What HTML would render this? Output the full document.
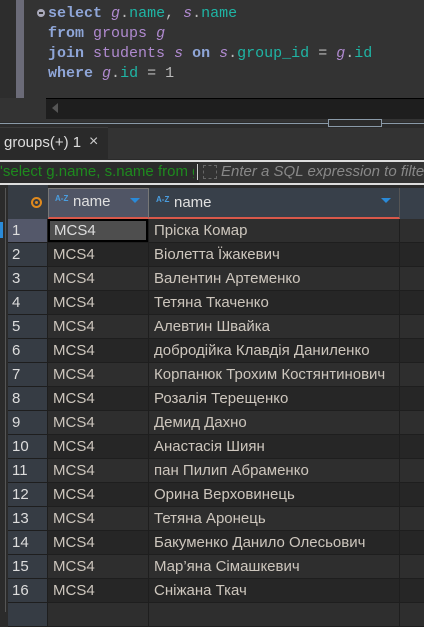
<!DOCTYPE html>
<html><head><meta charset="utf-8"><style>
*{margin:0;padding:0;box-sizing:border-box}
body{width:424px;height:622px;background:#2b2b2b;overflow:hidden;position:relative;font-family:"Liberation Sans","DejaVu Sans",sans-serif}
.abs{position:absolute}
.code{font-family:"Liberation Mono","DejaVu Sans Mono",monospace;font-size:15px;font-weight:bold;line-height:20px;white-space:pre;color:#ccc}
.k{color:#8fa6d8}.v{color:#b08ad0;font-style:italic;font-weight:normal}.t{color:#b08ad0;font-weight:normal}.c{color:#1fb5a5;font-weight:normal}.n{color:#bbb;font-weight:normal}
.row{position:absolute;left:0;width:424px;height:24px;font-size:15px;color:#cdc6bd}
.row div{position:absolute;top:0;height:24px;line-height:24px;border-right:1px solid #1e1e1e;border-bottom:1px solid #1e1e1e}
</style></head><body>
<div class="abs" style="left:0;top:0;width:424px;height:122px;background:#333"></div>
<div class="abs" style="left:0;top:0;width:16px;height:98px;background:#2d2d2d"></div>
<div class="abs" style="left:16px;top:0;width:8px;height:98px;background:#6b6b78"></div>
<div class="abs" style="left:37px;top:9px;width:8px;height:8px;border-radius:50%;background:#aab"></div>
<div class="abs" style="left:39px;top:12px;width:4px;height:2px;background:#333"></div>
<div class="abs code" style="left:48px;top:4px"><span class="k">select</span> <span class="v">g</span><span class="n">.</span><span class="c">name</span><span class="n">,</span> <span class="v">s</span><span class="n">.</span><span class="c">name</span>
<span class="k">from</span> <span class="t">groups</span> <span class="v">g</span>
<span class="k">join</span> <span class="t">students</span> <span class="v">s</span> <span class="k">on</span> <span class="v">s</span><span class="n">.</span><span class="c">group_id</span> <span class="n">=</span> <span class="v">g</span><span class="n">.</span><span class="c">id</span>
<span class="k">where</span> <span class="v">g</span><span class="n">.</span><span class="c">id</span> <span class="n">=</span> <span class="n">1</span></div>
<div class="abs" style="left:46px;top:98px;width:378px;height:21px;background:#1e1e1e;border-top:1px solid #000"></div>
<div class="abs" style="left:52px;top:103px;width:0;height:0;border-top:5px solid transparent;border-bottom:5px solid transparent;border-right:6px solid #555"></div>
<div class="abs" style="left:0;top:123px;width:424px;height:1px;background:#8a9aa8"></div>
<div class="abs" style="left:328px;top:119px;width:54px;height:8px;border:1px solid #8a9aa8;background:#2b2b2b"></div>
<div class="abs" style="left:0;top:127px;width:108px;height:6px;background:#3a3a3a"></div>
<div class="abs" style="left:0;top:128px;width:108px;height:31px;background:#2a2a2a"></div>
<div class="abs" style="left:108px;top:128px;width:316px;height:31px;background:#333"></div>
<div class="abs" style="left:4px;top:134px;font-size:15px;color:#ddd">groups(+) 1</div>
<div class="abs" style="left:89px;top:133px;font-size:16px;color:#ccc">×</div>
<div class="abs" style="left:0;top:160px;width:424px;height:2px;background:#ddd"></div>
<div class="abs" style="left:0;top:162px;width:424px;height:21px;background:#2b2b2b"></div>
<div class="abs" style="left:0;top:163px;width:194px;font-size:15px;color:#1e8a1e;white-space:nowrap;overflow:hidden">ʹselect g.name, s.name from g</div>
<div class="abs" style="left:197px;top:164px;width:1px;height:16px;background:#ccc"></div>
<div class="abs" style="left:199px;top:162px;width:225px;height:21px;background:#333"></div>
<div class="abs" style="left:203px;top:165px;width:14px;height:14px;border:1px dashed #666"></div>
<div class="abs" style="left:221px;top:163px;font-size:15px;font-style:italic;color:#888;white-space:nowrap">Enter a SQL expression to filter r</div>
<div class="abs" style="left:0;top:183px;width:424px;height:2px;background:#ddd"></div>
<div class="abs" style="left:0;top:185px;width:424px;height:437px;background:#2b2b2b"></div>
<div class="abs" style="left:0;top:188px;width:6px;height:424px;background:#2b2b2b;border-right:1px solid #555"></div>
<div class="abs" style="left:8px;top:185px;width:40px;height:34px;background:#363c44"></div>
<div class="abs" style="left:31px;top:197px;width:11px;height:11px;border:2px solid #e08a1e;border-radius:50%"></div>
<div class="abs" style="left:35px;top:201px;width:3px;height:3px;background:#e08a1e;border-radius:50%"></div>
<div class="abs" style="left:48px;top:188px;width:101px;height:31px;background:#505565;border:1px solid #777;border-bottom:2px solid #d9584a"></div>
<div class="abs" style="left:149px;top:188px;width:251px;height:31px;background:#38404a;border-right:1px solid #555;border-bottom:2px solid #d9584a"></div>
<div class="abs" style="left:400px;top:188px;width:24px;height:31px;background:#38404a"></div>
<div class="abs" style="left:55px;top:194px;font-size:8px;color:#4a9ee0;font-weight:bold">A-Z</div>
<div class="abs" style="left:73px;top:193px;font-size:15px;color:#e0e0e0">name</div>
<div class="abs" style="left:130px;top:198px;border-left:5px solid transparent;border-right:5px solid transparent;border-top:5px solid #2a8ad8"></div>
<div class="abs" style="left:156px;top:195px;font-size:8px;color:#4a9ee0;font-weight:bold">A-Z</div>
<div class="abs" style="left:174px;top:194px;font-size:15px;color:#e0e0e0">name</div>
<div class="abs" style="left:381px;top:198px;border-left:5px solid transparent;border-right:5px solid transparent;border-top:5px solid #2a8ad8"></div>
<div class="abs" style="left:0;top:222px;width:3px;height:16px;background:#2a8ad8"></div>
<div id="rows"></div>
<script>
var n=["Пріска Комар","Віолетта Їжакевич","Валентин Артеменко","Тетяна Ткаченко","Алевтин Швайка","добродійка Клавдія Даниленко","Корпанюк Трохим Костянтинович","Розалія Терещенко","Демид Дахно","Анастасія Шиян","пан Пилип Абраменко","Орина Верховинець","Тетяна Аронець","Бакуменко Данило Олесьович","Мар’яна Сімашкевич","Сніжана Ткач",""];
var h="";
for(var i=0;i<17;i++){var y=219+i*24,bg=i%2?"#262626":"#2e2e2e";
h+='<div class="row" style="top:'+y+'px"><div style="left:8px;width:40px;background:'+(i==0?"#54586a":"#363c44")+';padding-left:4px;color:#ddd">'+(i<16?i+1:"")+'</div>'+
'<div style="left:48px;width:101px;background:'+bg+';padding-left:5px">'+(i<16?"MCS4":"")+'</div>'+
'<div style="left:149px;width:251px;background:'+bg+';padding-left:5px;white-space:nowrap;overflow:hidden">'+n[i]+'</div>'+
'<div style="left:400px;width:24px;background:'+bg+';border-right:none"></div></div>';}
document.getElementById("rows").innerHTML=h;
</script>
<div class="abs" style="left:48px;top:219px;width:100px;height:23px;background:#4e4e4e;border:2px solid #000;font-size:15px;color:#ddd;line-height:19px;padding-left:4px">MCS4</div>
</body></html>
